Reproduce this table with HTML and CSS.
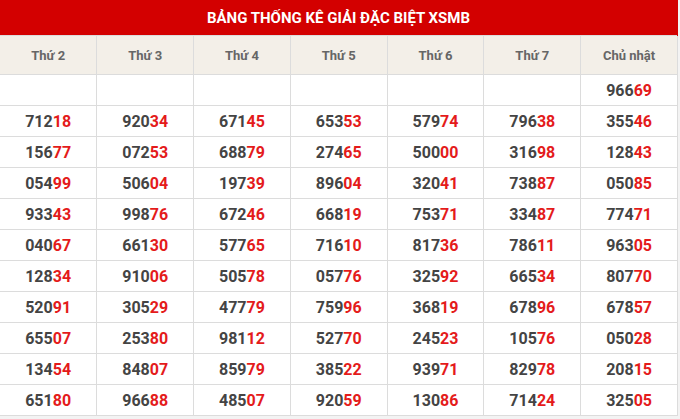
FILE: index.html
```html
<!DOCTYPE html>
<html lang="vi">
<head>
<meta charset="utf-8">
<link rel="stylesheet" href="styles.css">
</head>
<body>
<table class="stats">
<thead>
<tr><th class="title" colspan="7">BẢNG THỐNG KÊ GIẢI ĐẶC BIỆT XSMB</th></tr>
<tr class="days"><th>Thứ 2</th><th>Thứ 3</th><th>Thứ 4</th><th>Thứ 5</th><th>Thứ 6</th><th>Thứ 7</th><th>Chủ nhật</th></tr>
</thead>
<tbody>
<tr><td></td><td></td><td></td><td></td><td></td><td></td><td>966<b>69</b></td></tr>
<tr><td>712<b>18</b></td><td>920<b>34</b></td><td>671<b>45</b></td><td>653<b>53</b></td><td>579<b>74</b></td><td>796<b>38</b></td><td>355<b>46</b></td></tr>
<tr><td>156<b>77</b></td><td>072<b>53</b></td><td>688<b>79</b></td><td>274<b>65</b></td><td>500<b>00</b></td><td>316<b>98</b></td><td>128<b>43</b></td></tr>
<tr><td>054<b>99</b></td><td>506<b>04</b></td><td>197<b>39</b></td><td>896<b>04</b></td><td>320<b>41</b></td><td>738<b>87</b></td><td>050<b>85</b></td></tr>
<tr><td>933<b>43</b></td><td>998<b>76</b></td><td>672<b>46</b></td><td>668<b>19</b></td><td>753<b>71</b></td><td>334<b>87</b></td><td>774<b>71</b></td></tr>
<tr><td>040<b>67</b></td><td>661<b>30</b></td><td>577<b>65</b></td><td>716<b>10</b></td><td>817<b>36</b></td><td>786<b>11</b></td><td>963<b>05</b></td></tr>
<tr><td>128<b>34</b></td><td>910<b>06</b></td><td>505<b>78</b></td><td>057<b>76</b></td><td>325<b>92</b></td><td>665<b>34</b></td><td>807<b>70</b></td></tr>
<tr><td>520<b>91</b></td><td>305<b>29</b></td><td>477<b>79</b></td><td>759<b>96</b></td><td>368<b>19</b></td><td>678<b>96</b></td><td>678<b>57</b></td></tr>
<tr><td>655<b>07</b></td><td>253<b>80</b></td><td>981<b>12</b></td><td>527<b>70</b></td><td>245<b>23</b></td><td>105<b>76</b></td><td>050<b>28</b></td></tr>
<tr><td>134<b>54</b></td><td>848<b>07</b></td><td>859<b>79</b></td><td>385<b>22</b></td><td>939<b>71</b></td><td>829<b>78</b></td><td>208<b>15</b></td></tr>
<tr><td>651<b>80</b></td><td>966<b>88</b></td><td>485<b>07</b></td><td>920<b>59</b></td><td>130<b>86</b></td><td>714<b>24</b></td><td>325<b>05</b></td></tr>
</tbody>
</table>
</body>
</html>
```
FILE: styles.css
```css
html, body {
  margin: 0;
  padding: 0;
  background: #f3f3f3;
}
body {
  font-family: Roboto, "Liberation Sans", Arial, sans-serif;
}
.stats {
  width: 678px;
  border-collapse: collapse;
  table-layout: fixed;
  background: #fff;
}
.stats th, .stats td {
  border: 1px solid #dcdcdc;
  text-align: center;
  padding: 0;
}
.stats tr > :first-child { border-left: none; }
.stats .title {
  background: #d30000;
  color: #fff;
  font-size: 15px;
  font-weight: 700;
  height: 35px;
  border: none;
  border-right: 1px solid #d30000;
}
.stats .days th {
  background: #f3efe8;
  color: #666;
  font-size: 13px;
  font-weight: 700;
  height: 38px;
}
.stats td {
  height: 30px;
  font-size: 16px;
  font-weight: 700;
  color: #444;
}
.stats td b {
  color: #e41b1b;
  font-weight: 700;
}
```
